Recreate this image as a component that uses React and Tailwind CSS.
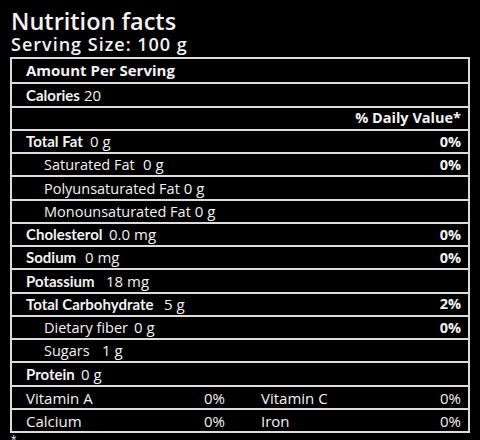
import React from 'react';

// rows of the label: kind "main" = bold label, "sub" = indented regular label
const rows = [
  { label: 'Amount Per Serving', kind: 'main', big: true },
  { label: 'Calories', value: '20', kind: 'main', w: 'min-w-[52px]' },
  { dv: '% Daily Value*' },
  { label: 'Total Fat', value: '0 g', dv: '0%', kind: 'main', w: 'min-w-[60px]' },
  { label: 'Saturated Fat', value: '0 g', dv: '0%', kind: 'sub', w: 'min-w-[95px]' },
  { label: 'Polyunsaturated Fat', value: '0 g', kind: 'sub', w: 'min-w-[135px]' },
  { label: 'Monounsaturated Fat', value: '0 g', kind: 'sub', w: 'min-w-[144px]' },
  { label: 'Cholesterol', value: '0.0 mg', dv: '0%', kind: 'main', w: 'min-w-[79px]' },
  { label: 'Sodium', value: '0 mg', dv: '0%', kind: 'main', w: 'min-w-[55px]' },
  { label: 'Potassium', value: '18 mg', kind: 'main', w: 'min-w-[76px]' },
  { label: 'Total Carbohydrate', value: '5 g', dv: '2%', kind: 'main', w: 'min-w-[134px]' },
  { label: 'Dietary fiber', value: '0 g', dv: '0%', kind: 'sub', w: 'min-w-[86px]' },
  { label: 'Sugars', value: '1 g', kind: 'sub', w: 'min-w-[54px]' },
  { label: 'Protein', value: '0 g', kind: 'main', w: 'min-w-[51px]' },
];

const vitamins = [
  ['Vitamin A', '0%', 'Vitamin C', '0%'],
  ['Calcium', '0%', 'Iron', '0%'],
];

const App = () => {
  return (
    <div className="w-[480px] h-[440px] overflow-hidden bg-black text-[#f2f2f2] font-['Open_Sans',sans-serif] px-[10px] pt-[9px]">
      <h1 className="text-[23.5px] font-semibold leading-[25px] pl-[1px]">Nutrition facts</h1>
      <h2 className="text-[18px] font-semibold leading-[21px] pl-[1px] tracking-[1px]">Serving Size: 100 g</h2>

      <div className="mt-[2px] w-[460px] border-2 border-[#dcdcdc]">
        {rows.map((row, idx) => (
          <div
            key={idx}
            className={`h-[23.25px] flex items-center justify-between pr-[7px] text-[14.5px] ${
              idx > 0 ? 'border-t-2 border-[#dcdcdc]' : ''
            } ${row.kind === 'sub' ? 'pl-[32px]' : 'pl-[14px]'}`}
          >
            <span className="flex items-baseline whitespace-nowrap">
              {row.label && (
                <span
                  className={`inline-block ${row.w || ''} ${
                    row.kind === 'main'
                      ? row.big
                        ? 'font-bold text-[15px]'
                        : "font-['Lato',sans-serif] font-bold text-[15px]"
                      : ''
                  }`}
                >
                  {row.label}
                </span>
              )}
              {row.value && <span className="ml-[4px] text-[15px]">{row.value}</span>}
            </span>
            {row.dv && <span className="font-bold text-[14.5px]">{row.dv}</span>}
          </div>
        ))}

        {vitamins.map((v, idx) => (
          <div
            key={idx}
            className="h-[23.25px] grid grid-cols-2 border-t-2 border-[#dcdcdc] text-[15px]"
          >
            <div className="flex items-center justify-between pl-[14px] pr-[15px]">
              <span>{v[0]}</span>
              <span>{v[1]}</span>
            </div>
            <div className="flex items-center justify-between pl-[21px] pr-[7px]">
              <span>{v[2]}</span>
              <span>{v[3]}</span>
            </div>
          </div>
        ))}
      </div>

      <div className="text-[10px] leading-none pl-[1px] mt-[1px]">*</div>
    </div>
  );
};

export default App;
